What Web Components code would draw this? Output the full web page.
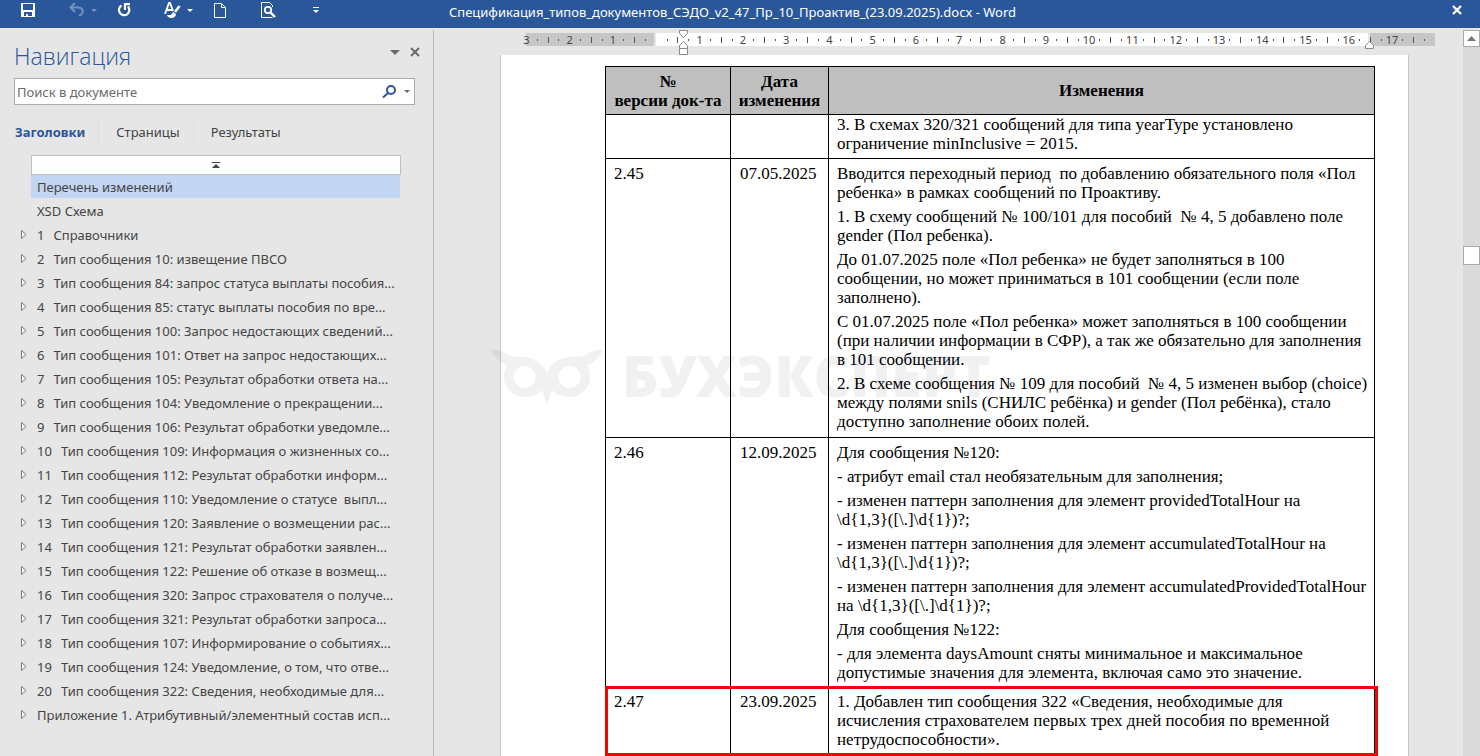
<!DOCTYPE html>
<html lang="ru">
<head>
<meta charset="utf-8">
<title>Спецификация_типов_документов_СЭДО_v2_47_Пр_10_Проактив_(23.09.2025).docx - Word</title>
<style>
html, body { margin: 0; height: 100%; }
body { overflow: hidden; font-family: "Noto Sans", "Open Sans", sans-serif; font-size: 13px; color: #444; background: #e6e6e6; }
</style>
</head>
<body>
<word-window></word-window>
<script>
function define(name, html, setup) {
  const template = document.createElement('template');
  template.innerHTML = `<style>
    * { box-sizing: border-box; }
    button { border: 0; padding: 0; margin: 0; background: none; font: inherit; color: inherit; }
    svg { display: block; }
  </style>` + html;
  customElements.define(name, class extends HTMLElement {
    constructor() {
      super();
      this.attachShadow({ mode: 'open' }).append(template.content.cloneNode(true));
    }
    connectedCallback() { if (setup) setup(this.shadowRoot, this); }
  });
}

define('title-bar', `
<style>
:host { display: grid; grid-template-columns: 1fr auto 1fr; height: 28px; background: #2a579a; color: #fff; padding: 0 15px 0 14px; }
.tools { display: grid; grid-template-columns: repeat(7, 48px); height: 20px; }
.cell { display: flex; align-items: center; }
.cell button { width: 28px; height: 20px; display: flex; align-items: center; justify-content: center; }
.cell button.drop { width: 8px; }
.off { opacity: .35; }
h1 { margin: 0; padding-right: 14px; font-size: 13px; font-weight: 400; line-height: 24px; white-space: nowrap; }
.close { justify-self: end; height: 20px; width: 16px; display: flex; align-items: center; justify-content: center; }
</style>
<div class="tools">
  <div class="cell"><button aria-label="Сохранить"><svg width="14" height="14" viewBox="0 0 14 14"><path d="M0 0h14v14H0z" fill="#fff"/><path d="M2 1h10v6H2zM3 9h8v4H7v-2H5v2H3z" fill="#2a579a"/></svg></button></div>
  <div class="cell off"><button aria-label="Отменить"><svg width="15" height="14" viewBox="0 0 15 14" fill="none" stroke="#fff" stroke-width="2"><path d="M6 0 1.500 4.500 6 9M2 4.500h7c6 0 6 7 1 8"/></svg></button><button class="drop" aria-label="Список отмены"><svg width="6" height="3"><path d="M0 0h6L3 3z" fill="#fff"/></svg></button></div>
  <div class="cell"><button aria-label="Повторить"><svg width="14" height="14" viewBox="0 0 14 14" fill="none" stroke="#fff" stroke-width="2.200"><path d="M4.500 2.500a5.200 5.200 0 1 0 6.500 1M8 7V1.200h5"/></svg></button></div>
  <div class="cell"><button aria-label="Стили"><svg width="17" height="16" viewBox="0 0 17 16" fill="none" stroke="#fff" stroke-width="1.900"><path d="M1 12 5 1h1l3 8M3 8h5"/><path d="m15.500 4-4.500 6" stroke-width="2.600"/><path d="M3 13h4l2-3 3 2c0 4-5 5-8 3z" fill="#fff" stroke="none"/></svg></button><button class="drop" aria-label="Список стилей"><svg width="6" height="3"><path d="M0 0h6L3 3z" fill="#fff"/></svg></button></div>
  <div class="cell"><button aria-label="Создать"><svg width="12" height="15" viewBox="0 0 12 15" fill="none" stroke="#fff"><path d="M.5.5h7l4 4v10H.5zM7.500.5v4h4"/></svg></button></div>
  <div class="cell"><button aria-label="Просмотр"><svg width="15" height="16" viewBox="0 0 15 16" fill="none" stroke="#fff"><path d="M11.500 5V3.500l-3-3h-8v15h11"/><circle cx="7" cy="8" r="3.200" stroke-width="1.800"/><path d="m9.500 10.500 4.500 4.500" stroke-width="2.400"/></svg></button></div>
  <div class="cell"><button aria-label="Настройка панели"><svg width="6" height="7"><path d="M0 0h6v1H0zM0 3h6L3 6z" fill="#fff"/></svg></button></div>
</div>
<h1>Спецификация_типов_документов_СЭДО_v2_47_Пр_10_Проактив_(23.09.2025).docx - Word</h1>
<button class="close" aria-label="Закрыть"><svg width="10" height="10" viewBox="0 0 10 10"><path d="m1 1 8 8M9 1 1 9" stroke="#fff" stroke-width="2.400"/></svg></button>
`);

define('nav-item', `
<style>
:host { display: flex; height: 24px; }
.toggle { width: 31px; padding-left: 21px; height: 22px; display: flex; align-items: center; }
.toggle[hidden] { display: block; visibility: hidden; }
a { flex: 1; display: flex; gap: 9px; height: 23px; line-height: 24px; padding-left: 6px; color: #444; text-decoration: none; white-space: pre; }
:host([current]) a { background: #c2d5f2; }
</style>
<button class="toggle" aria-label="Развернуть"><svg width="6" height="9" viewBox="0 0 6 9"><path d="M.5.5 5 4.500.5 8.500z" fill="#fff" stroke="#777"/></svg></button>
<a href="#"><slot name="num"></slot><slot></slot></a>
`, (root, host) => { root.querySelector('.toggle').hidden = host.hasAttribute('leaf'); });

define('nav-pane', `
<style>
:host { display: block; width: 434px; border-right: 1px solid #b9b9b9; background: #e6e6e6; flex: none; margin-top: 2px; }
header { display: flex; align-items: flex-start; height: 48px; padding: 8px 8px 0 14px; }
h2 { margin: 0; flex: 1; font: 300 23px/36px "Open Sans", sans-serif; color: #2a579a; }
header button { width: 20px; height: 28px; display: flex; align-items: center; justify-content: center; }
.search { display: flex; align-items: center; margin: 0 18px 0 14px; height: 27px; border: 1px solid #ababab; background: #fff; }
input { flex: 1; min-width: 0; border: 0; outline: 0; padding: 0 2px; font: inherit; height: 24px; background: none; color: #444; }
input::placeholder { color: #6a6a6a; opacity: 1; }
.search button { height: 24px; display: flex; align-items: center; justify-content: center; }
.find { width: 22px; } .opts { width: 14px; }
.tabs { display: flex; margin-top: 15px; padding-left: 15px; height: 24px; }
.tabs button { line-height: 24px; padding-right: 13px; margin-right: 17px; border-right: 1px solid #dedede; }
.tabs button:last-child { border: 0; }
.tabs button[aria-selected=true] { font-weight: 700; color: #2a579a; }
.jump { display: grid; margin: 11px 32px 0 31px; }
.jump button { display: flex; align-items: center; justify-content: center; height: 20px; border: 1px solid #c0c0c0; background: #fdfdfd; }
.tree { margin-right: 33px; }
</style>
<header>
  <h2>Навигация</h2>
  <button aria-label="Параметры области"><svg width="10" height="5"><path d="M0 0h10L5 5z" fill="#6a6a6a"/></svg></button>
  <button aria-label="Закрыть область"><svg width="10" height="10" viewBox="0 0 10 10"><path d="m1 1 8 8M9 1 1 9" stroke="#6a6a6a" stroke-width="2"/></svg></button>
</header>
<div class="search">
  <input type="text" placeholder="Поиск в документе" aria-label="Поиск в документе">
  <button class="find" aria-label="Найти"><svg width="14" height="13" viewBox="0 0 14 13" fill="none" stroke="#2a579a" stroke-width="2"><circle cx="9" cy="5" r="4"/><path d="M6 8 1 12.500"/></svg></button>
  <button class="opts" aria-label="Параметры поиска"><svg width="6" height="3"><path d="M0 0h6L3 3z" fill="#6a6a6a"/></svg></button>
</div>
<div class="tabs" role="tablist">
  <button role="tab" aria-selected="true">Заголовки</button>
  <button role="tab" aria-selected="false">Страницы</button>
  <button role="tab" aria-selected="false">Результаты</button>
</div>
<div class="jump"><button aria-label="К началу"><svg width="8" height="6"><path d="M0 0h8v1H0zM4 2l4 4H0z" fill="#444"/></svg></button></div>
<div class="tree"></div>
`, root => {
  const items = [
    ['', 'Перечень изменений'], ['', 'XSD Схема'],
    ['1', 'Справочники'],
    ['2', 'Тип сообщения 10: извещение ПВСО'],
    ['3', 'Тип сообщения 84: запрос статуса выплаты пособия...'],
    ['4', 'Тип сообщения 85: статус выплаты пособия по вре...'],
    ['5', 'Тип сообщения 100: Запрос недостающих сведений...'],
    ['6', 'Тип сообщения 101: Ответ на запрос недостающих...'],
    ['7', 'Тип сообщения 105: Результат обработки ответа на...'],
    ['8', 'Тип сообщения 104: Уведомление о прекращении...'],
    ['9', 'Тип сообщения 106: Результат обработки уведомле...'],
    ['10', 'Тип сообщения 109: Информация о жизненных со...'],
    ['11', 'Тип сообщения 112: Результат обработки информ...'],
    ['12', 'Тип сообщения 110: Уведомление о статусе  выпл...'],
    ['13', 'Тип сообщения 120: Заявление о возмещении рас...'],
    ['14', 'Тип сообщения 121: Результат обработки заявлен...'],
    ['15', 'Тип сообщения 122: Решение об отказе в возмещ...'],
    ['16', 'Тип сообщения 320: Запрос страхователя о получе...'],
    ['17', 'Тип сообщения 321: Результат обработки запроса...'],
    ['18', 'Тип сообщения 107: Информирование о событиях...'],
    ['19', 'Тип сообщения 124: Уведомление, о том, что отве...'],
    ['20', 'Тип сообщения 322: Сведения, необходимые для...'],
    ['', 'Приложение 1. Атрибутивный/элементный состав исп...']
  ];
  root.querySelector('.tree').innerHTML = items.map(([n, t], i) =>
    `<nav-item ${i < 2 ? 'leaf' : ''} ${i === 0 ? 'current' : ''}>${n ? `<span slot="num">${n}</span>` : ''}<span>${t}</span></nav-item>`).join('');
});

define('page-ruler', `
<style>
:host { display: block; position: relative; width: 909px; height: 13px; background: linear-gradient(90deg, #c6c6c6 128px, #e6e6e6 128px 130px, #fff 130px 842px, #e6e6e6 842px 844px, #c6c6c6 844px); font: 11px/13px "Noto Sans", sans-serif; color: #444; }
.scale { display: grid; grid-template-columns: repeat(84, minmax(0, 1fr)); position: relative; left: -5px; }
.scale span { display: flex; align-items: center; justify-content: center; height: 13px; }
.dot::before { content: ""; width: 1px; height: 2px; background: #555; }
.half::before { content: ""; width: 1px; height: 6px; background: #555; }
svg { position: absolute; }
.indent { left: 151px; top: -3px; } .right { left: 839px; top: 8px; }
</style>
<div class="scale"></div>
<svg class="indent" width="13" height="25" fill="#fff" stroke="#8a8a8a"><path d="M2.500.5h8v3l-4 4-4-4zM2.500 18.500v-3l4-4 4 4v3zM2.500 18.500h8v6h-8z"/></svg>
<svg class="right" width="10" height="9" fill="#fff" stroke="#8a8a8a"><path d="M.5 7.500v-3l4-4 4 4v3z"/></svg>
`, root => {
  let html = '';
  for (let i = 0; i < 84; i++) {
    const n = Math.abs(i / 4 - 3);
    html += i % 4 ? `<span class="${i % 4 === 2 ? 'half' : 'dot'}"></span>` : `<span>${n || ''}</span>`;
  }
  root.querySelector('.scale').innerHTML = html;
});

define('changes-table', `
<style>
:host { display: block; position: relative; width: 770px; font: 17px/19px "Liberation Serif", "Times New Roman", serif; color: #000; }
table { border-collapse: collapse; table-layout: fixed; width: 770px; }
th, td { border: 1px solid #000; padding: 5px 8px 0; vertical-align: top; text-align: left; font-weight: 400; }
thead th { background: #bfbfbf; font-weight: 700; text-align: center; vertical-align: middle; padding: 0; height: 48px; }
td:last-child { padding-right: 0; }
td:nth-child(2) { padding: 5px 0 0 9px; }
p { margin: 0 0 5px; white-space: pre; }
p:last-child { margin: 0; }
tbody tr.cont td { padding-top: 0; }
.frame { position: absolute; left: 0; right: -3px; bottom: 0; height: 70px; border: 3px solid #ec0606; pointer-events: none; }
</style>
<table>
<colgroup><col style="width:125px"><col style="width:98px"><col></colgroup>
<thead><tr><th scope="col">№<br>версии док-та</th><th scope="col">Дата<br>изменения</th><th scope="col">Изменения</th></tr></thead>
<tbody></tbody>
</table>
<div class="frame"></div>
`, root => {
  const rows = [
    [44, '', '', ['3. В схемах 320/321 сообщений для типа yearType установлено\nограничение minInclusive = 2015.']],
    [279, '2.45', '07.05.2025', [
      'Вводится переходный период  по добавлению обязательного поля «Пол\nребенка» в рамках сообщений по Проактиву.',
      '1. В схему сообщений № 100/101 для пособий  № 4, 5 добавлено поле\ngender (Пол ребенка).',
      'До 01.07.2025 поле «Пол ребенка» не будет заполняться в 100\nсообщении, но может приниматься в 101 сообщении (если поле\nзаполнено).',
      'С 01.07.2025 поле «Пол ребенка» может заполняться в 100 сообщении\n(при наличии информации в СФР), а так же обязательно для заполнения\nв 101 сообщении.',
      '2. В схеме сообщения № 109 для пособий  № 4, 5 изменен выбор (choice)\nмежду полями snils (СНИЛС ребёнка) и gender (Пол ребёнка), стало\nдоступно заполнение обоих полей.']],
    [249, '2.46', '12.09.2025', [
      'Для сообщения №120:',
      '- атрибут email стал необязательным для заполнения;',
      '- изменен паттерн заполнения для элемент providedTotalHour на\n\\d{1,3}([\\.]\\d{1})?;',
      '- изменен паттерн заполнения для элемент accumulatedTotalHour на\n\\d{1,3}([\\.]\\d{1})?;',
      '- изменен паттерн заполнения для элемент accumulatedProvidedTotalHour\nна \\d{1,3}([\\.]\\d{1})?;',
      'Для сообщения №122:',
      '- для элемента daysAmount сняты минимальное и максимальное\nдопустимые значения для элемента, включая само это значение.']],
    [69, '2.47', '23.09.2025', ['1. Добавлен тип сообщения 322 «Сведения, необходимые для\nисчисления страхователем первых трех дней пособия по временной\nнетрудоспособности».']]
  ];
  root.querySelector('tbody').innerHTML = rows.map(([h, v, d, ps]) =>
    `<tr style="height:${h}px" class="${v ? '' : 'cont'}"><td>${v}</td><td>${d}</td><td>${ps.map(p => `<p>${p}</p>`).join('')}</td></tr>`).join('');
});

define('water-mark', `
<style>
:host { display: flex; align-items: flex-start; gap: 19px; position: absolute; left: -10px; top: 295px; color: #14143c; opacity: .055; pointer-events: none; font: 800 56px/50px "Open Sans", sans-serif; white-space: nowrap; }
</style>
<svg width="112" height="56" viewBox="0 0 112 56"><path fill="currentColor" fill-rule="evenodd" d="M0 0C8 0 12 1 16 4 19 7 25 7 33 7 44 7 52 14 56 23 60 14 68 7 79 7 87 7 93 7 96 4 100 1 104 0 112 0 108 8 103 12 96 15 98 19 99 23 99 27 99 38 90 47 79 47 72 47 66 45 61 40L56 55 51 40C46 45 40 47 33 47 22 47 13 38 13 27 13 23 14 19 16 15 9 12 4 8 0 0zM33.500 16a11 11 0 1 0 0 22 11 11 0 1 0 0-22zM78.500 16a11 11 0 1 0 0 22 11 11 0 1 0 0-22z"/></svg>
<span>БУХЭКСПЕРТ</span>
`);

define('scroll-bar', `
<style>
:host { display: flex; flex-direction: column; width: 17px; flex: none; margin-top: 2px; background: #dadada; }
button, .thumb { width: 17px; background: #fff; border: 1px solid #ababab; }
button { height: 17px; display: flex; align-items: center; justify-content: center; }
.before { flex: 199 0 0; } .after { flex: 491 0 0; }
.thumb { height: 19px; }
</style>
<button aria-label="Вверх"><svg width="9" height="5"><path d="M0 5h9L4.500 0z" fill="#777"/></svg></button>
<div class="before"></div><div class="thumb"></div><div class="after"></div>
`);

define('word-window', `
<style>
:host { display: flex; flex-direction: column; height: 100vh; overflow: hidden; }
.body { flex: 1; display: flex; min-height: 0; }
.doc { flex: 1; min-width: 0; display: flex; flex-direction: column; align-items: center; padding: 5px 0 0 12px; }
page-ruler { margin-left: 52px; flex: none; }
.sheet { position: relative; width: 909px; flex: 1; margin-top: 9px; padding: 11px 0 0 104px; background: #fff; border: solid #c6c6c6; border-width: 0 1px; }
</style>
<title-bar></title-bar>
<div class="body">
  <nav-pane></nav-pane>
  <div class="doc">
    <page-ruler></page-ruler>
    <div class="sheet"><changes-table></changes-table><water-mark></water-mark></div>
  </div>
  <scroll-bar></scroll-bar>
</div>
`);
</script>
</body>
</html>
